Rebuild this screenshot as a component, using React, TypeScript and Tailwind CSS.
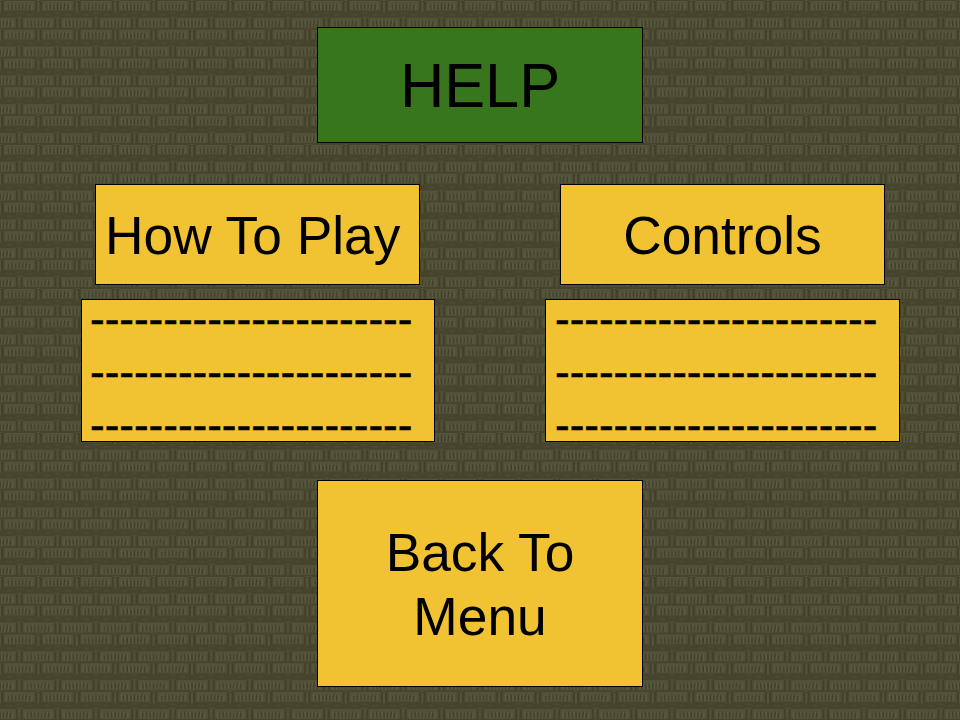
import React from "react";

const DASHES = "-".repeat(22);

function Weave() {
  return (
    <svg className="absolute inset-0 h-full w-full" aria-hidden="true">
      <defs>
        <g id="block">
          <rect x="0" y="0" width="31" height="9.4" fill="#4e4d36" />
          <path d="M0 .6H31" stroke="#55543c" strokeWidth="1.1" />
          <path d="M1 8.9H30" stroke="#504f37" strokeWidth=".9" />
          <path d="M.6 0V9.4M30.4 0V9.4" stroke="#515039" strokeWidth="1" />
          <path
            d="M2.6 2.2V9M6 2.2V9M9.6 2.2L10 9M13.4 2.2V9M17 2.2V9M20.6 2.2L20 9M24.2 2.2L23.4 9M27.8 2.2V9"
            stroke="#5a5a42"
            strokeWidth="1.8"
          />
          <path
            d="M4.3 3.4L4.6 8.6M7.8 2.6L8.4 8.6M11.6 3.4L12 8.6M15.3 2.6V8.6M18.9 3.2L18.4 8.6M22.5 2.6L21.6 8.6M26 3.4L25.2 8.6"
            stroke="#403e26"
            strokeWidth="1.4"
          />
        </g>
        <pattern id="weave" width="38.4" height="28.8" patternUnits="userSpaceOnUse">
          <rect width="38.4" height="28.8" fill="#46442c" />
          <path d="M0 2V12M38.4 2V12M19.2 18V28" stroke="#53523a" strokeWidth="2" />
          <path d="M2.4 1V11M36 1V11M16.9 18V28M21.6 18V28" stroke="#413f28" strokeWidth="1.2" />
          <use href="#block" x="3.9" y="1" />
          <use href="#block" x="-15.3" y="18" />
          <use href="#block" x="23.1" y="18" />
          <path
            d="M0 .5H2.5M36 .5H38.4M16.5 17.3H22M16.5 12.8H22M7 14.8H12M27 14.8H32"
            stroke="#504f37"
            strokeWidth=".9"
          />
        </pattern>
      </defs>
      <rect width="960" height="720" fill="url(#weave)" />
    </svg>
  );
}

function DashedText() {
  return (
    <div className="-mt-2 text-[44px] leading-[53px] whitespace-nowrap [-webkit-text-stroke:0.5px_black]">
      <p>{DASHES}</p>
      <p>{DASHES}</p>
      <p>{DASHES}</p>
    </div>
  );
}

export default function App() {
  return (
    <div className="relative h-[720px] w-[960px] overflow-hidden bg-[#46442c] font-['Liberation_Sans',Arial,sans-serif] text-black">
      <Weave />
      <main className="relative flex h-full flex-col pt-[27px]">
        <h1 className="ml-[317px] flex h-[116px] w-[326px] items-center justify-center border border-black bg-[#38761d] text-[61.33px] leading-[70px]">
          <span className="scale-y-104">HELP</span>
        </h1>
        <div className="mt-[41px] flex">
          <h2 className="ml-[95px] flex h-[101px] w-[325px] items-center border border-black bg-[#f1c232] pt-[3px] pl-[9px] text-[53.33px] leading-[64px] whitespace-nowrap">
            <span className="scale-y-102">How To Play</span>
          </h2>
          <h2 className="ml-[140px] flex h-[101px] w-[325px] items-center justify-center border border-black bg-[#f1c232] pt-[3px] text-[53.33px] leading-[64px]">
            <span className="scale-y-102">Controls</span>
          </h2>
        </div>
        <div className="mt-[14px] flex">
          <div className="ml-[81px] h-[143px] w-[354px] border border-black bg-[#f1c232] pl-2">
            <DashedText />
          </div>
          <div className="ml-[110px] h-[143px] w-[355px] border border-black bg-[#f1c232] pl-[9px]">
            <DashedText />
          </div>
        </div>
        <button className="mt-[38px] ml-[317px] flex h-[207px] w-[326px] flex-col items-center justify-center border border-black bg-[#f1c232] pt-[3px] text-[53.33px] leading-[64px]">
          <span className="scale-y-102">Back To</span>
          <span className="scale-y-102">Menu</span>
        </button>
      </main>
    </div>
  );
}
